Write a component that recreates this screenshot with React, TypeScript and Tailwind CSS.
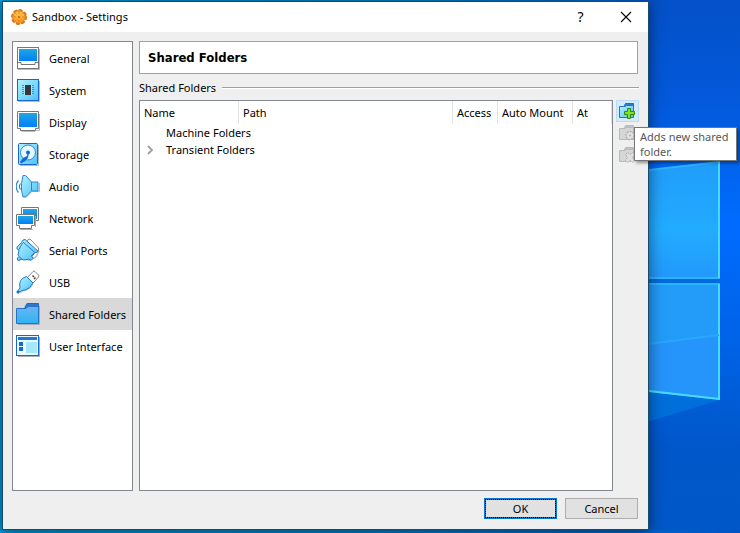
import type { ReactNode } from "react";

const BLUE = "#1668d0";

function Glyph({ children }: { children: ReactNode }) {
  return (
    <svg viewBox="0 0 24 24" className="h-6 w-6 shrink-0" aria-hidden="true">
      {children}
    </svg>
  );
}

function Gradients() {
  return (
    <svg className="absolute h-0 w-0" aria-hidden="true">
      <defs>
        <linearGradient id="screen" x1="0" y1="0" x2="0" y2="1">
          <stop offset="0" stopColor="#20a5e2" />
          <stop offset="1" stopColor="#0080f8" />
        </linearGradient>
        <linearGradient id="pale" x1="0" y1="0" x2="1" y2="1">
          <stop offset="0" stopColor="#b4f2ff" />
          <stop offset="1" stopColor="#4cc2fa" />
        </linearGradient>
        <linearGradient id="folder" x1="0" y1="0" x2="0" y2="1">
          <stop offset="0" stopColor="#6cb4f2" />
          <stop offset="1" stopColor="#2cb4f4" />
        </linearGradient>
        <linearGradient id="gold" x1="0" y1="0" x2="0" y2="1">
          <stop offset="0" stopColor="#ffce55" />
          <stop offset="1" stopColor="#ff941c" />
        </linearGradient>
      </defs>
    </svg>
  );
}

function GeneralIcon() {
  return (
    <Glyph>
      <path d="M2 23.500h21.500V3" fill="none" stroke="#bbb" />
      <rect x="1.500" y="1.500" width="21" height="21" fill="#fff" stroke="#777" />
      <rect x="3" y="3" width="18" height="12" fill="url(#screen)" />
      <path d="M2 16.500h3v2h14v-2h3" fill="none" stroke="#777" />
    </Glyph>
  );
}

function SystemIcon() {
  return (
    <Glyph>
      <path d="M2 23.500h21.500V3" fill="none" stroke="#bbb" />
      <rect x="1.500" y="1.500" width="21" height="21" fill="url(#pale)" stroke={BLUE} />
      <path d="M6 7.500h12M6 9.500h12M6 11.500h12M6 13.500h12M6 15.500h12" stroke="#4a8fb8" />
      <path d="M8.500 7v10M15.500 7v10" stroke="#a9e6fb" />
      <rect x="9" y="7" width="6" height="10" fill="#33383c" />
    </Glyph>
  );
}

function DisplayIcon() {
  return (
    <Glyph>
      <path d="M4 20.500h2v1h13v-1h4.500V4" fill="none" stroke="#bbb" />
      <path d="M1.500 1.500h21v17h-3v2h-15v-2h-3z" fill="#fff" stroke="#777" />
      <rect x="3" y="3" width="18" height="14" fill="url(#screen)" />
    </Glyph>
  );
}

function StorageIcon() {
  return (
    <Glyph>
      <path d="M4 23.500h18.500V3" fill="none" stroke="#bbb" />
      <rect x="2.500" y="1.500" width="19" height="21" rx="1" fill="url(#pale)" stroke={BLUE} />
      <ellipse cx="12" cy="10.500" rx="7.500" ry="7.500" fill="#e6f9ff" stroke="#3387d5" />
      <path d="M12 9.500c1.500 4 0 7-2.500 9.500L5 21.500 4 20l3-4 4-2z" fill={BLUE} />
      <circle cx="12" cy="10.500" r="2" fill={BLUE} />
    </Glyph>
  );
}

function AudioIcon() {
  return (
    <Glyph>
      <path d="M7 21.500l3 2 6-6h7.500V9" fill="none" stroke="#bbb" />
      <path d="M5.500 9.500L7 1.500h2.500l6 6.500h6.500v9h-6.500l-6 6H7L5.500 16z" fill="url(#pale)" stroke="#2f86c8" />
      <path d="M15.500 8v9" stroke="#2f86c8" />
      <path d="M4.500 9.500a5 5 0 0 0 0 6M2.500 6.500a9 9 0 0 0 0 12" fill="none" stroke="#2f86c8" strokeWidth="1.200" />
    </Glyph>
  );
}

function NetworkIcon() {
  return (
    <Glyph>
      <path d="M5.500 1.500h17v13h-3v2h-14z" fill="#fff" stroke="#777" />
      <rect x="7" y="3" width="14" height="10" fill="url(#screen)" />
      <path d="M4 23.500h13M19.500 10v11" stroke="#aaa" />
      <path d="M.5 8.500h18v11h-3v3h-12v-3h-3z" fill="#fff" stroke="#777" />
      <rect x="2" y="10" width="15" height="8" fill="url(#screen)" />
    </Glyph>
  );
}

function SerialIcon() {
  return (
    <Glyph>
      <path d="M3 23l2-2 8 1 7-3 3-6" fill="none" stroke="#bbb" strokeWidth="1.500" />
      <path d="M11 5l1-3.500 2-.5 8.500 9v3l-3 1z" fill="#fff" stroke="#888" />
      <path d="M5.500 4.500L1 9v2l2 1-1 5 1 1.500L1.500 20v2l1.500.500 2-1.500 3 1 5-1 2 1.500 2-2-1-2 3-4h2l1-1.500L9 1.500l-2 .500z" fill="url(#pale)" stroke="#2878c0" />
      <path d="M7 4l12 10.500M6.500 5L3 11.500M18 15l-3 3.500M3 18.500l2.500 2.500" fill="none" stroke="#2878c0" />
    </Glyph>
  );
}

function UsbIcon() {
  return (
    <Glyph>
      <path d="M11.500 7.500l5.500-6q1-1 2 0l3.500 3.500q1 1 0 2L17 13z" fill="#fff" stroke="#888" />
      <path d="M16.500 5.500l1.500 1.500M19.500 7.500l-1.500 1.500" stroke="#444" strokeWidth="1.500" />
      <path d="M4 23l3-2q7-1 10-7" fill="none" stroke="#bbb" />
      <path d="M10.500 6.500l6.500 6.500q-3 6-8 7-3 0-5.500 2L2 20.500 4 18q-2-9 6.500-11.500z" fill="url(#pale)" stroke="#2878c0" />
      <circle cx="2" cy="22" r="1.500" fill={BLUE} />
    </Glyph>
  );
}

function FolderIcon() {
  return (
    <Glyph>
      <path d="M2 22.500h21.500V4" fill="none" stroke="#aab" />
      <path d="M9 5l2-3.500h11.500v7H9z" fill="#2f78d0" stroke="#2468c0" />
      <path d="M.5 6.500h9.500l2-2h10.500v17H.5z" fill="url(#folder)" stroke="#2672cb" />
    </Glyph>
  );
}

function InterfaceIcon() {
  return (
    <Glyph>
      <path d="M2 22.500h21.500V3" fill="none" stroke="#aab" />
      <rect x=".5" y="1.500" width="22" height="20" fill="#e9fbff" stroke={BLUE} />
      <path d="M2 4.500h19" stroke="#2676d2" strokeWidth="3" />
      <path d="M3 8h4v4H3zM3 13h4v4H3z" fill={BLUE} />
      <rect x="10" y="8" width="11" height="11" fill="#a5e8fc" />
    </Glyph>
  );
}

function GearIcon() {
  return (
    <svg viewBox="0 0 16 16" className="h-4 w-4" aria-hidden="true">
      <circle cx="8" cy="8" r="6.500" fill="none" stroke="#d9791a" strokeWidth="3" strokeLinecap="round" strokeDasharray="1.600 3.500" />
      <circle cx="8" cy="8" r="6" fill="url(#gold)" stroke="#e88a24" />
      <path d="M8 3v2M8 11v2M3 8h2M11 8h2M4.500 4.500l1 1M10.500 10.500l1 1M4.500 11.500l1-1M10.500 5.500l1-1" stroke="#e07a18" />
      <circle cx="8" cy="8" r="1" fill="#c6580c" />
    </svg>
  );
}

type FolderAction = "add" | "edit" | "remove";

function ActionIcon({ kind }: { kind: FolderAction }) {
  const live = kind === "add";
  return (
    <svg viewBox="0 0 16 16" className="h-4 w-4" aria-hidden="true">
      <path d="M5.500 2.500l1-2h8v4h-9z" fill={live ? "#2f78d0" : "#c2c2c2"} stroke={live ? "#2468c0" : "#bbb"} />
      <path d="M.5 3.500h6l1-1h7v12H.5z" fill={live ? "url(#pale)" : "#d6d6d6"} stroke={live ? "#2672cb" : "#b8b8b8"} />
      {kind === "add" && (
        <path d="M8.500 5.500h3v3h4v3h-4v4h-3v-4h-3v-3h3z" fill="#7fe321" stroke="#2e8512" />
      )}
      {kind === "edit" && (
        <>
          <circle cx="11" cy="10.500" r="4" fill="#e2e2e2" stroke="#b0b0b0" strokeWidth="1.500" strokeDasharray="2 1" />
          <circle cx="11" cy="10.500" r="1" fill="#b0b0b0" />
        </>
      )}
      {kind === "remove" && (
        <path d="M6.500 7.500l2-2 2.500 2 2.500-2 2 2-2 3 2 3-2 2-2.500-2-2.500 2-2-2 2-3z" fill="#dedede" stroke="#b0b0b0" strokeDasharray="2 1" />
      )}
    </svg>
  );
}

function Wallpaper() {
  return (
    <svg
      viewBox="0 0 740 533"
      preserveAspectRatio="none"
      className="absolute inset-0 h-full w-full"
      aria-hidden="true"
    >
      <defs>
        <linearGradient id="sky" x1="0" y1="0" x2="1" y2="0">
          <stop offset="0" stopColor="#0098da" />
          <stop offset=".5" stopColor="#0080cc" />
          <stop offset=".88" stopColor="#0062ca" />
          <stop offset="1" stopColor="#0052c4" />
        </linearGradient>
        <linearGradient id="right" x1="0" y1="0" x2="0" y2="1">
          <stop offset="0" stopColor="#0450c8" />
          <stop offset=".2" stopColor="#035adc" />
          <stop offset=".42" stopColor="#006cff" />
          <stop offset=".65" stopColor="#0062e6" />
          <stop offset=".85" stopColor="#0057c9" />
          <stop offset="1" stopColor="#0058c8" />
        </linearGradient>
        <linearGradient id="pane" x1="0" y1="0" x2="0" y2="1">
          <stop offset="0" stopColor="#209cfa" />
          <stop offset=".6" stopColor="#22acff" />
          <stop offset="1" stopColor="#2298fc" />
        </linearGradient>
      </defs>
      <rect width="740" height="533" fill="url(#sky)" />
      <rect x="640" width="100" height="530" fill="url(#right)" />
      <path d="M640 170l80-9v239l-80-10z" fill="#006be0" />
      <path d="M640 171l80-10v117h-80z" fill="url(#pane)" />
      <path d="M640 283h80v52l-80 10z" fill="#229cf8" />
      <path d="M640 345l80-10v65l-80-10z" fill="#2594fb" />
      <path d="M640 390l80 10-80 24z" fill="#006fdb" />
      <path d="M640 171l79-9v116h-79M640 284h79v115l-79-9" fill="none" stroke="#2cb4fc" strokeWidth="2" />
      <path d="M719 162v116M719 284v115l-79-9" fill="none" stroke="#46dcff" strokeWidth="2" />
      <path d="M640 345l79-10" stroke="#28a8fc" strokeWidth="2" />
    </svg>
  );
}

const categories: { label: string; icon: ReactNode }[] = [
  { label: "General", icon: <GeneralIcon /> },
  { label: "System", icon: <SystemIcon /> },
  { label: "Display", icon: <DisplayIcon /> },
  { label: "Storage", icon: <StorageIcon /> },
  { label: "Audio", icon: <AudioIcon /> },
  { label: "Network", icon: <NetworkIcon /> },
  { label: "Serial Ports", icon: <SerialIcon /> },
  { label: "USB", icon: <UsbIcon /> },
  { label: "Shared Folders", icon: <FolderIcon /> },
  { label: "User Interface", icon: <InterfaceIcon /> },
];

function Sidebar() {
  return (
    <nav aria-label="Categories" className="w-[121px] shrink-0 border border-[#828790] bg-white">
      {categories.map(({ label, icon }) => {
        const current = label === "Shared Folders";
        return (
          <button
            key={label}
            type="button"
            aria-current={current ? "page" : undefined}
            className={`flex h-8 w-full items-center gap-[9px] pl-[3px] text-left whitespace-nowrap ${
              current ? "bg-[#d9d9d9]" : ""
            }`}
          >
            {icon}
            <span className="pt-px">{label}</span>
          </button>
        );
      })}
    </nav>
  );
}

function FolderTable() {
  const head = "border-r border-[#e2e2e2] px-1 text-left font-normal whitespace-nowrap";
  return (
    <div className="min-w-0 flex-1 border border-[#828790] bg-white">
      <table className="w-full table-fixed border-separate border-spacing-0">
        <thead>
          <tr className="h-[23px]">
            <th className={`${head} w-[99px]`}>Name</th>
            <th className={head}>Path</th>
            <th className={`${head} w-[45px]`}>Access</th>
            <th className={`${head} w-[75px]`}>Auto Mount</th>
            <th className={`${head} w-[39px]`}>At</th>
          </tr>
        </thead>
        <tbody>
          <tr className="h-[17px]">
            <td colSpan={5} className="pl-[26px]">Machine Folders</td>
          </tr>
          <tr className="h-[17px]">
            <td colSpan={5}>
              <div className="flex items-center">
                <button type="button" aria-label="Expand Transient Folders" className="flex w-[26px] pl-[6px]">
                  <svg viewBox="0 0 8 10" className="h-[10px] w-2" aria-hidden="true">
                    <path d="M2 1l4 4-4 4" fill="none" stroke="#a0a0a0" strokeWidth="1.800" />
                  </svg>
                </button>
                Transient Folders
              </div>
            </td>
          </tr>
        </tbody>
      </table>
    </div>
  );
}

function Toolbar() {
  const button = "flex h-[22px] w-[23px] items-center border pl-[2px]";
  return (
    <div className="relative ml-[3px] w-[23px] shrink-0">
      <button type="button" aria-label="Add shared folder" className={`${button} border-[#b9dcf5] bg-[#d8eaf9]`}>
        <ActionIcon kind="add" />
      </button>
      <button type="button" disabled aria-label="Edit shared folder" className={`${button} border-transparent`}>
        <ActionIcon kind="edit" />
      </button>
      <button type="button" disabled aria-label="Remove shared folder" className={`${button} border-transparent`}>
        <ActionIcon kind="remove" />
      </button>
      <div
        role="tooltip"
        className="absolute top-[27px] left-[18px] z-10 w-[103px] border border-[#767676] bg-white py-px pl-[5px] leading-[15px] text-[#575757] shadow-[2px_2px_3px_rgba(0,0,0,0.4)]"
      >
        Adds new shared folder.
      </div>
    </div>
  );
}

function TitleBar() {
  return (
    <header className="flex h-[30px] shrink-0 items-center bg-white pl-2">
      <GearIcon />
      <h1 className="ml-[5px] flex-1">Sandbox - Settings</h1>
      <button type="button" aria-label="Help" className="flex w-[45px] justify-center text-[14px]">
        ?
      </button>
      <button type="button" aria-label="Close" className="flex w-[45px] justify-center">
        <svg viewBox="0 0 12 12" className="h-3 w-3" aria-hidden="true">
          <path d="M1 1l10 10M11 1L1 11" stroke="#000" strokeWidth="1.100" />
        </svg>
      </button>
    </header>
  );
}

export default function App() {
  return (
    <div className="relative flex h-screen overflow-hidden font-['Noto_Sans','Open_Sans',sans-serif] text-[11px] leading-4 text-black">
      <Gradients />
      <Wallpaper />
      <main className="relative mt-px mr-[91px] mb-[3px] ml-[2px] flex min-w-0 flex-1 flex-col border border-[#164a70] bg-[#efefef] shadow-[0_2px_14px_rgba(0,0,0,0.5)]">
        <TitleBar />
        <div className="flex min-h-0 flex-1 gap-[6px] pt-[9px] pr-[9px] pl-[9px]">
          <Sidebar />
          <section className="flex min-w-0 flex-1 flex-col">
            <h2 className="mr-px flex h-[33px] shrink-0 items-center border border-[#a0a0a0] bg-white pt-px pl-2 font-['DejaVu_Sans_Condensed','DejaVu_Sans',sans-serif] text-[13px] font-bold">
              Shared Folders
            </h2>
            <div className="mt-[6px] flex h-4 shrink-0 items-center gap-[6px]">
              <h3>Shared Folders</h3>
              <div className="h-[2px] flex-1 border-t border-b border-t-[#a0a0a0] border-b-white" />
            </div>
            <div className="mt-1 flex min-h-0 flex-1">
              <FolderTable />
              <Toolbar />
            </div>
          </section>
        </div>
        <footer className="flex shrink-0 justify-end gap-2 pt-[7px] pr-[10px] pb-[10px]">
          <button type="button" className="h-[21px] w-[73px] border-2 border-[#0078d7] bg-[#e1e1e1] leading-none outline-1 -outline-offset-2 outline-black outline-dotted">
            OK
          </button>
          <button type="button" className="h-[21px] w-[73px] border border-[#adadad] bg-[#e1e1e1] leading-none">
            Cancel
          </button>
        </footer>
      </main>
    </div>
  );
}
